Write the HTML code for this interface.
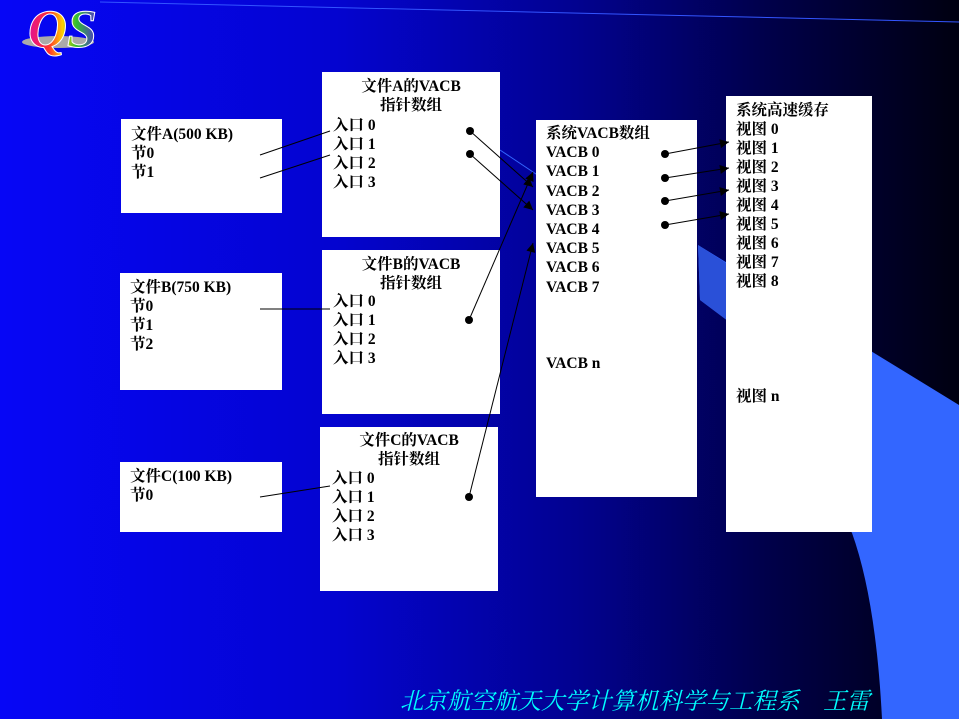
<!DOCTYPE html>
<html><head><meta charset="utf-8"><style>
html,body{margin:0;padding:0}
body{width:959px;height:719px;position:relative;overflow:hidden;background:linear-gradient(90deg,#0606f6 0%,#0404d0 35%,#020290 60%,#00004a 80%,#000010 100%);font-family:"Liberation Serif","Noto Serif CJK SC",serif;font-weight:bold;}
.b{position:absolute;background:#fff;color:#000;font-size:15.5px;line-height:19px}
.t{position:absolute;white-space:nowrap}
svg{position:absolute;left:0;top:0}
</style></head><body>
<svg width="959" height="719">
<path d="M698,245 L959,405 L959,719 L882,719 Q876,600 852,533 L740,330 L700,300 Z" fill="#3366ff"/>
<path d="M698,245 L740,272 L740,330 L700,300 Z" fill="#2a50d8"/>
<line x1="100" y1="2" x2="959" y2="22" stroke="#3355ff" stroke-width="1"/>
<line x1="500" y1="150" x2="560" y2="190" stroke="#3366ff" stroke-width="1"/>
</svg>
<svg width="130" height="60">
<defs><linearGradient id="g" x1="0" x2="1"><stop offset="0" stop-color="#e0109a"/><stop offset=".3" stop-color="#ff3030"/><stop offset=".5" stop-color="#ffd000"/><stop offset=".7" stop-color="#30c030"/><stop offset="1" stop-color="#5030d0"/></linearGradient></defs>
<ellipse cx="58" cy="42" rx="36" ry="6" fill="#aaa"/>
<text x="28" y="47" font-family="Liberation Serif" font-style="italic" font-size="54" fill="url(#g)" stroke="#fff" stroke-width="1">QS</text>
</svg>

<div class="b" style="left:121px;top:119px;width:161px;height:94px"><div class="t" style="left:10px;top:6px">文件A(500 KB)<br>节0<br>节1</div></div>
<div class="b" style="left:322px;top:72px;width:178px;height:165px"><div class="t" style="left:0;width:178px;text-align:center;top:5px">文件A的VACB<br>指针数组</div><div class="t" style="left:11px;top:44px">入口 0<br>入口 1<br>入口 2<br>入口 3</div></div>
<div class="b" style="left:120px;top:273px;width:162px;height:117px"><div class="t" style="left:10px;top:5px">文件B(750 KB)<br>节0<br>节1<br>节2</div></div>
<div class="b" style="left:322px;top:250px;width:178px;height:164px"><div class="t" style="left:0;width:178px;text-align:center;top:5px">文件B的VACB<br>指针数组</div><div class="t" style="left:11px;top:42px">入口 0<br>入口 1<br>入口 2<br>入口 3</div></div>
<div class="b" style="left:120px;top:462px;width:162px;height:70px"><div class="t" style="left:10px;top:5px">文件C(100 KB)<br>节0</div></div>
<div class="b" style="left:320px;top:427px;width:178px;height:164px"><div class="t" style="left:0;width:178px;text-align:center;top:4px">文件C的VACB<br>指针数组</div><div class="t" style="left:12px;top:42px">入口 0<br>入口 1<br>入口 2<br>入口 3</div></div>
<div class="b" style="left:536px;top:120px;width:161px;height:377px"><div class="t" style="left:10px;top:4px;line-height:19.2px">系统VACB数组<br>VACB 0<br>VACB 1<br>VACB 2<br>VACB 3<br>VACB 4<br>VACB 5<br>VACB 6<br>VACB 7</div><div class="t" style="left:10px;top:234px">VACB n</div></div>
<div class="b" style="left:726px;top:96px;width:146px;height:436px"><div class="t" style="left:10px;top:5px;line-height:19px">系统高速缓存<br>视图 0<br>视图 1<br>视图 2<br>视图 3<br>视图 4<br>视图 5<br>视图 6<br>视图 7<br>视图 8</div><div class="t" style="left:10px;top:291px">视图 n</div></div>

<svg width="959" height="719">
<defs><marker id="a" viewBox="0 0 10 10" refX="10" refY="5" markerWidth="13" markerHeight="9" orient="auto" markerUnits="userSpaceOnUse"><path d="M0,0 L10,5 L0,10 Z" fill="#000"/></marker></defs>
<g stroke="#000" stroke-width="1" fill="none">
<line x1="260" y1="155" x2="330" y2="131"/>
<line x1="260" y1="178" x2="330" y2="155"/>
<line x1="260" y1="309" x2="330" y2="309"/>
<line x1="260" y1="497" x2="330" y2="486"/>
<line x1="470" y1="131" x2="533" y2="187" marker-end="url(#a)"/>
<line x1="470" y1="154" x2="533" y2="210" marker-end="url(#a)"/>
<line x1="469" y1="320" x2="533" y2="172" marker-end="url(#a)"/>
<line x1="469" y1="497" x2="533" y2="243" marker-end="url(#a)"/>
<line x1="665" y1="154" x2="729" y2="142" marker-end="url(#a)"/>
<line x1="665" y1="178" x2="729" y2="168" marker-end="url(#a)"/>
<line x1="665" y1="201" x2="729" y2="190" marker-end="url(#a)"/>
<line x1="665" y1="225" x2="729" y2="214" marker-end="url(#a)"/>
</g>
<g fill="#000">
<circle cx="470" cy="131" r="4"/><circle cx="470" cy="154" r="4"/><circle cx="469" cy="320" r="4"/><circle cx="469" cy="497" r="4"/>
<circle cx="665" cy="154" r="4"/><circle cx="665" cy="178" r="4"/><circle cx="665" cy="201" r="4"/><circle cx="665" cy="225" r="4"/>
</g>
</svg>
<div class="t" style="left:400px;top:682px;color:#00ffff;font-style:italic;font-weight:normal;font-size:23.5px;font-family:'Liberation Serif','Noto Serif CJK SC',serif">北京航空航天大学计算机科学与工程系　王雷</div>
</body></html>
